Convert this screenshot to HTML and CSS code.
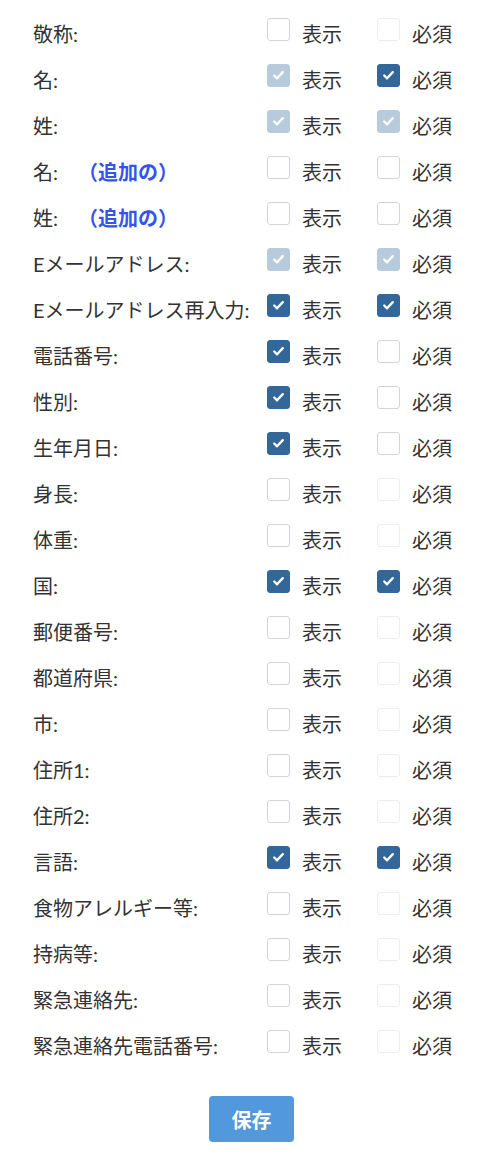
FILE: index.html
```html
<!DOCTYPE html>
<html lang="ja">
<head>
<meta charset="utf-8">
<title>項目設定</title>
<link rel="stylesheet" href="styles.css">
</head>
<body>
<div class="form">
  <div class="rows">
    <div class="row"><div class="label">敬称:</div>
      <div class="opt"><span class="box"></span><span class="txt">表示</span></div>
      <div class="opt"><span class="box box-off"></span><span class="txt">必須</span></div></div>
    <div class="row"><div class="label">名:</div>
      <div class="opt"><span class="box box-on box-dis"><svg viewBox="0 0 22 22"><path d="M6.5 11.5l3 3 6-6.5"/></svg></span><span class="txt">表示</span></div>
      <div class="opt"><span class="box box-on"><svg viewBox="0 0 22 22"><path d="M6.5 11.5l3 3 6-6.5"/></svg></span><span class="txt">必須</span></div></div>
    <div class="row"><div class="label">姓:</div>
      <div class="opt"><span class="box box-on box-dis"><svg viewBox="0 0 22 22"><path d="M6.5 11.5l3 3 6-6.5"/></svg></span><span class="txt">表示</span></div>
      <div class="opt"><span class="box box-on box-dis"><svg viewBox="0 0 22 22"><path d="M6.5 11.5l3 3 6-6.5"/></svg></span><span class="txt">必須</span></div></div>
    <div class="row"><div class="label">名:<span class="extra">（追加の）</span></div>
      <div class="opt"><span class="box"></span><span class="txt">表示</span></div>
      <div class="opt"><span class="box"></span><span class="txt">必須</span></div></div>
    <div class="row"><div class="label">姓:<span class="extra">（追加の）</span></div>
      <div class="opt"><span class="box"></span><span class="txt">表示</span></div>
      <div class="opt"><span class="box"></span><span class="txt">必須</span></div></div>
    <div class="row"><div class="label">Eメールアドレス:</div>
      <div class="opt"><span class="box box-on box-dis"><svg viewBox="0 0 22 22"><path d="M6.5 11.5l3 3 6-6.5"/></svg></span><span class="txt">表示</span></div>
      <div class="opt"><span class="box box-on box-dis"><svg viewBox="0 0 22 22"><path d="M6.5 11.5l3 3 6-6.5"/></svg></span><span class="txt">必須</span></div></div>
    <div class="row"><div class="label">Eメールアドレス再入力:</div>
      <div class="opt"><span class="box box-on"><svg viewBox="0 0 22 22"><path d="M6.5 11.5l3 3 6-6.5"/></svg></span><span class="txt">表示</span></div>
      <div class="opt"><span class="box box-on"><svg viewBox="0 0 22 22"><path d="M6.5 11.5l3 3 6-6.5"/></svg></span><span class="txt">必須</span></div></div>
    <div class="row"><div class="label">電話番号:</div>
      <div class="opt"><span class="box box-on"><svg viewBox="0 0 22 22"><path d="M6.5 11.5l3 3 6-6.5"/></svg></span><span class="txt">表示</span></div>
      <div class="opt"><span class="box"></span><span class="txt">必須</span></div></div>
    <div class="row"><div class="label">性別:</div>
      <div class="opt"><span class="box box-on"><svg viewBox="0 0 22 22"><path d="M6.5 11.5l3 3 6-6.5"/></svg></span><span class="txt">表示</span></div>
      <div class="opt"><span class="box"></span><span class="txt">必須</span></div></div>
    <div class="row"><div class="label">生年月日:</div>
      <div class="opt"><span class="box box-on"><svg viewBox="0 0 22 22"><path d="M6.5 11.5l3 3 6-6.5"/></svg></span><span class="txt">表示</span></div>
      <div class="opt"><span class="box"></span><span class="txt">必須</span></div></div>
    <div class="row"><div class="label">身長:</div>
      <div class="opt"><span class="box"></span><span class="txt">表示</span></div>
      <div class="opt"><span class="box box-off"></span><span class="txt">必須</span></div></div>
    <div class="row"><div class="label">体重:</div>
      <div class="opt"><span class="box"></span><span class="txt">表示</span></div>
      <div class="opt"><span class="box box-off"></span><span class="txt">必須</span></div></div>
    <div class="row"><div class="label">国:</div>
      <div class="opt"><span class="box box-on"><svg viewBox="0 0 22 22"><path d="M6.5 11.5l3 3 6-6.5"/></svg></span><span class="txt">表示</span></div>
      <div class="opt"><span class="box box-on"><svg viewBox="0 0 22 22"><path d="M6.5 11.5l3 3 6-6.5"/></svg></span><span class="txt">必須</span></div></div>
    <div class="row"><div class="label">郵便番号:</div>
      <div class="opt"><span class="box"></span><span class="txt">表示</span></div>
      <div class="opt"><span class="box box-off"></span><span class="txt">必須</span></div></div>
    <div class="row"><div class="label">都道府県:</div>
      <div class="opt"><span class="box"></span><span class="txt">表示</span></div>
      <div class="opt"><span class="box box-off"></span><span class="txt">必須</span></div></div>
    <div class="row"><div class="label">市:</div>
      <div class="opt"><span class="box"></span><span class="txt">表示</span></div>
      <div class="opt"><span class="box box-off"></span><span class="txt">必須</span></div></div>
    <div class="row"><div class="label">住所1:</div>
      <div class="opt"><span class="box"></span><span class="txt">表示</span></div>
      <div class="opt"><span class="box box-off"></span><span class="txt">必須</span></div></div>
    <div class="row"><div class="label">住所2:</div>
      <div class="opt"><span class="box"></span><span class="txt">表示</span></div>
      <div class="opt"><span class="box box-off"></span><span class="txt">必須</span></div></div>
    <div class="row"><div class="label">言語:</div>
      <div class="opt"><span class="box box-on"><svg viewBox="0 0 22 22"><path d="M6.5 11.5l3 3 6-6.5"/></svg></span><span class="txt">表示</span></div>
      <div class="opt"><span class="box box-on"><svg viewBox="0 0 22 22"><path d="M6.5 11.5l3 3 6-6.5"/></svg></span><span class="txt">必須</span></div></div>
    <div class="row"><div class="label">食物アレルギー等:</div>
      <div class="opt"><span class="box"></span><span class="txt">表示</span></div>
      <div class="opt"><span class="box box-off"></span><span class="txt">必須</span></div></div>
    <div class="row"><div class="label">持病等:</div>
      <div class="opt"><span class="box"></span><span class="txt">表示</span></div>
      <div class="opt"><span class="box box-off"></span><span class="txt">必須</span></div></div>
    <div class="row"><div class="label">緊急連絡先:</div>
      <div class="opt"><span class="box"></span><span class="txt">表示</span></div>
      <div class="opt"><span class="box box-off"></span><span class="txt">必須</span></div></div>
    <div class="row"><div class="label">緊急連絡先電話番号:</div>
      <div class="opt"><span class="box"></span><span class="txt">表示</span></div>
      <div class="opt"><span class="box box-off"></span><span class="txt">必須</span></div></div>
  </div>
  <div class="actions"><button class="save" type="button">保存</button></div>
</div>
</body>
</html>
```
FILE: styles.css
```css
html, body {
  margin: 0;
  padding: 0;
  background: #fff;
}
body {
  font-family: Lato, "Noto Sans CJK JP", sans-serif;
  font-size: 20px;
  color: #333;
}
.form {
  padding: 11px 0 0 33px;
}
.rows {
  display: flex;
  flex-direction: column;
}
.row {
  display: grid;
  grid-template-columns: 234px 110px auto;
  height: 46px;
  align-items: center;
}
.label {
  line-height: 46px;
  white-space: nowrap;
  display: flex;
  align-items: center;
}
.extra {
  margin-left: 20px;
  color: #3355ee;
  font-weight: 700;
}
.opt {
  display: flex;
  align-items: center;
  height: 46px;
}
.box {
  box-sizing: border-box;
  width: 23px;
  height: 23px;
  border: 1px solid #d4d4d4;
  border-radius: 3px;
  background: #fff;
  margin-bottom: 10px;
  margin-right: 12px;
  display: flex;
  align-items: center;
  justify-content: center;
  flex: none;
}
.box-off {
  border-color: #ededed;
}
.box-on {
  background: #336699;
  border-color: #336699;
}
.box-on.box-dis {
  background: #b7cbdd;
  border-color: #b7cbdd;
}
.box svg {
  width: 22px;
  height: 22px;
  fill: none;
  stroke: #fff;
  stroke-width: 2.4;
  stroke-linecap: round;
  stroke-linejoin: round;
}
.txt {
  line-height: 46px;
}
.actions {
  display: flex;
  justify-content: center;
  padding: 27px 0 0 0;
  margin-left: -24px;
}
.save {
  width: 85px;
  height: 46px;
  border: none;
  border-radius: 4px;
  background: #5198dc;
  color: #fff;
  font-family: Lato, "Noto Sans CJK JP", sans-serif;
  font-size: 20px;
  font-weight: 700;
  padding: 0;
}
```
